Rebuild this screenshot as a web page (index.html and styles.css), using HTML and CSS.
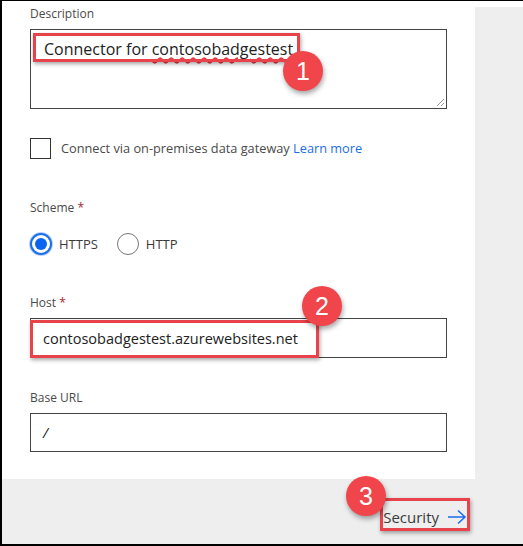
FILE: index.html
```html
<!DOCTYPE html>
<html>
<head>
<meta charset="utf-8">
<link rel="stylesheet" href="styles.css">
</head>
<body>
<div class="screen">
  <div class="frame">
    <div class="main">
      <div class="panel">
        <div class="label lbl-desc">Description</div>
        <div class="field textarea">
          <span class="value">Connector for <span class="misspelled">contosobadgestest</span></span>
          <svg class="grip" width="10" height="10" viewBox="0 0 10 10"><path d="M9 2 L2 9 M9 6 L6 9" stroke="#999" stroke-width="1"/></svg>
        </div>
        <div class="check-row">
          <span class="checkbox"></span>
          <span class="check-text">Connect via on-premises data gateway <a class="link">Learn more</a></span>
        </div>
        <div class="label lbl-scheme">Scheme <span class="req">*</span></div>
        <div class="radio-row">
          <span class="radio on"></span><span class="radio-text">HTTPS</span>
          <span class="radio"></span><span class="radio-text">HTTP</span>
        </div>
        <div class="label lbl-host">Host <span class="req">*</span></div>
        <div class="field input host"><span class="value">contosobadgestest.azurewebsites.net</span></div>
        <div class="label lbl-base">Base URL</div>
        <div class="field input base"><span class="value slash">/</span></div>
      </div>
      <div class="side"></div>
    </div>
    <div class="footer">
      <span class="next">Security</span>
      <svg class="arrow" width="20" height="16" viewBox="0 0 20 16"><path d="M1 8 H18 M11 1.5 L18 8 L11 14.5" fill="none" stroke="#1a6ef0" stroke-width="1.6"/></svg>
    </div>
  </div>
  <div class="hl hl1"></div>
  <div class="badge b1">1</div>
  <div class="hl hl2"></div>
  <div class="badge b2">2</div>
  <div class="hl hl3"></div>
  <div class="badge b3">3</div>
</div>
</body>
</html>
```
FILE: styles.css
```css
html, body { margin: 0; padding: 0; background: #fff; }
body { font-family: "Open Sans", "Noto Sans", sans-serif; color: #333; }
.screen { position: relative; width: 523px; height: 546px; overflow: hidden; }
.frame {
  width: 523px; height: 546px; box-sizing: border-box;
  border-left: 2px solid #000; border-top: 1px solid #000; border-bottom: 2px solid #000;
  background: #fff; display: flex; flex-direction: column;
}
.main { display: flex; height: 478px; }
.panel {
  width: 473px; background: #fff; box-sizing: border-box; padding-left: 28px;
  display: flex; flex-direction: column; align-items: flex-start;
}
.side { flex: 1; margin-top: 6px; background: #eeeeee; }
.footer {
  flex: 1; background: #eeeeee; display: flex; align-items: center;
  justify-content: flex-end; padding-right: 56px; padding-top: 11px; box-sizing: border-box;
}
.label { font-size: 12px; line-height: 16px; height: 16px; color: #4a4a4a; }
.req { color: #a4262c; }
.lbl-desc { margin-top: 5px; }
.field { box-sizing: border-box; width: 417px; border: 1.5px solid #444; background: #fff; position: relative; }
.textarea { margin-top: 7px; height: 80px; padding: 7px 0 0 13px; }
.textarea .value { font-size: 16px; line-height: 25px; color: #222; }
.misspelled { text-decoration: underline wavy #e8383f; text-decoration-thickness: 1.5px; text-underline-offset: 2px; }
.grip { position: absolute; right: 1px; bottom: 1px; }
.check-row { margin-top: 28px; display: flex; align-items: center; height: 22px; }
.checkbox { width: 21px; height: 21px; box-sizing: border-box; border: 1.5px solid #333; background: #fff; }
.check-text { margin-left: 10px; font-size: 12.75px; color: #4a4a4a; }
.link { color: #1a6ee8; text-decoration: none; }
.lbl-scheme { margin-top: 41px; }
.radio-row { margin-top: 16px; display: flex; align-items: center; height: 24px; }
.radio { width: 22px; height: 22px; box-sizing: border-box; border-radius: 50%; border: 1.5px solid #777; background: #fff; position: relative; }
.radio.on { border: 2px solid #1a6ef0; box-shadow: 0 0 0 1px #b8d0f8; }
.radio.on::after { content: ""; position: absolute; left: 3px; top: 3px; width: 12px; height: 12px; border-radius: 50%; background: #0a64f0; }
.radio-text { font-size: 13px; color: #3a3a3a; margin-left: 7px; margin-right: 19px; }
.lbl-host { margin-top: 39px; }
.input { margin-top: 7px; height: 40px; display: flex; align-items: center; padding-left: 12px; }
.input .value { font-size: 14.5px; color: #222; }
.lbl-base { margin-top: 32px; }
.base { height: 39px; }
.slash { font-style: italic; }
.next { font-size: 15px; color: #3a3a3a; }
.arrow { margin-left: 8px; }
.hl { position: absolute; box-sizing: border-box; border: 3px solid #e8434a; box-shadow: 1px 2px 4px rgba(0,0,0,0.35); }
.hl1 { left: 33px; top: 33px; width: 267px; height: 29px; }
.hl2 { left: 30px; top: 320px; width: 289px; height: 38px; }
.hl3 { left: 380px; top: 498px; width: 90px; height: 33px; }
.badge {
  position: absolute; width: 40px; height: 40px; border-radius: 50%; background: #f0454b;
  color: #fff; font-family: "Liberation Sans", Arial, sans-serif; font-size: 25px; line-height: 40px; text-align: center;
  box-shadow: 1px 3px 5px rgba(0,0,0,0.35);
}
.b1 { left: 283px; top: 51px; }
.b2 { left: 302px; top: 286px; }
.b3 { left: 346px; top: 476px; }
```
